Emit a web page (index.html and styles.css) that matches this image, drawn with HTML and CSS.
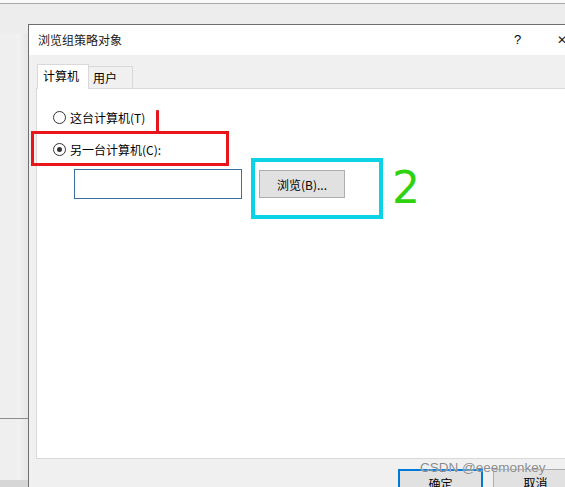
FILE: index.html
```html
<!DOCTYPE html>
<html lang="zh-CN">
<head>
<meta charset="utf-8">
<title>浏览组策略对象</title>
<link rel="stylesheet" href="styles.css">
</head>
<body>
<div class="desktop">
  <div class="topbar"></div>
  <div class="behind">
    <div class="behind-line"></div>
    <div class="behind-foot"></div>
  </div>

  <div class="dialog">
    <div class="titlebar">
      <span class="title">浏览组策略对象</span>
      <span class="help">?</span>
      <span class="close">✕</span>
    </div>
    <div class="body">
      <div class="tabs">
        <div class="tab active">计算机</div>
        <div class="tab">用户</div>
      </div>
      <div class="panel">
        <label class="radio-row first"><span class="radio"></span><span>这台计算机(T)</span></label>
        <label class="radio-row second"><span class="radio checked"></span><span>另一台计算机(C):</span></label>
        <div class="field-row">
          <div class="input"></div>
          <div class="button">浏览(B)...</div>
        </div>
      </div>
      <div class="footer">
        <div class="button footbtn default">确定</div>
        <div class="button footbtn">取消</div>
      </div>
    </div>
  </div>

  <div class="mark red-box"></div>
  <div class="mark red-one"></div>
  <div class="mark cyan-box"></div>
  <div class="mark green-two">2</div>
  <div class="mark watermark">CSDN @eeemonkey</div>
</div>
</body>
</html>
```
FILE: styles.css
```css
* { box-sizing: border-box; }
html, body { margin: 0; padding: 0; }
body {
  width: 565px;
  height: 487px;
  overflow: hidden;
  background: #efefef;
  font-family: "Noto Sans CJK SC", "Liberation Sans", sans-serif;
  font-size: 12px;
  color: #000;
}
.desktop {
  position: relative;
  width: 565px;
  height: 487px;
  overflow: hidden;
  background: #ededed;
}
.topbar {
  height: 4px;
  background: #fafafa;
  border-bottom: 1px solid #a8a8a8;
}
.behind {
  position: absolute;
  left: 0;
  top: 33px;
  width: 28px;
  height: 454px;
  background: linear-gradient(to right, #efefef 0px, #efefef 17px, #f3f3f3 17px, #e6e6e6 28px);
}
.behind-line {
  position: absolute;
  left: 0;
  top: 385px;
  width: 28px;
  height: 1px;
  background: #8c8c8c;
}
.behind-foot {
  position: absolute;
  left: 0;
  top: 447px;
  width: 28px;
  height: 7px;
  background: #d6d6d6;
}
.dialog {
  position: absolute;
  left: 28px;
  top: 24px;
  width: 580px;
  height: 500px;
  border: 1px solid #6f6f6f;
  background: #f0f0f0;
  display: flex;
  flex-direction: column;
}
.titlebar {
  height: 30px;
  background: #fff;
  display: flex;
  align-items: center;
  position: relative;
}
.title {
  margin-left: 9px;
  line-height: 30px;
  color: #1a1a1a;
}
.help {
  position: absolute;
  left: 485px;
  top: 0;
  line-height: 30px;
  font-family: "Liberation Sans", sans-serif;
  font-size: 13px;
}
.close {
  position: absolute;
  left: 528px;
  top: 0;
  line-height: 30px;
  font-family: "DejaVu Sans", sans-serif;
  font-size: 12px;
  color: #222;
}
.body {
  flex: 1;
  padding: 9px 0 0 7px;
  display: flex;
  flex-direction: column;
}
.tabs {
  display: flex;
  align-items: flex-end;
  height: 24px;
  position: relative;
  z-index: 1;
}
.tab {
  height: 22px;
  padding: 0 0 0 4px;
  width: 45px;
  border: 1px solid #d9d9d9;
  border-bottom: none;
  background: #f0f0f0;
  line-height: 22px;
  margin-left: -1px;
}
.tab.active {
  height: 25px;
  width: 52px;
  margin-left: 1px;
  margin-bottom: -1px;
  background: #fff;
  padding-left: 5px;
  line-height: 22px;
}
.panel {
  height: 371px;
  background: #fff;
  border: 1px solid #d9d9d9;
  display: flex;
  flex-direction: column;
  padding-left: 16px;
}
.radio-row {
  display: flex;
  align-items: center;
  gap: 4px;
  height: 16px;
}
.radio-row.first { margin-top: 20px; }
.radio-row.second { margin-top: 16px; }
.radio {
  width: 13px;
  height: 13px;
  border: 1px solid #333;
  border-radius: 50%;
  background: #fff;
  position: relative;
  flex: none;
}
.radio.checked::after {
  content: "";
  position: absolute;
  left: 3px;
  top: 3px;
  width: 5px;
  height: 5px;
  border-radius: 50%;
  background: #333;
}
.field-row {
  display: flex;
  align-items: flex-start;
  margin-top: 12px;
  margin-left: 21px;
  gap: 17px;
}
.input {
  width: 168px;
  height: 30px;
  border: 1px solid #3a6fa3;
  background: #fff;
}
.button {
  background: #e1e1e1;
  border: 1px solid #adadad;
  display: flex;
  align-items: center;
  justify-content: center;
}
.field-row .button {
  margin-top: 1px;
  width: 86px;
  height: 28px;
}
.footer {
  display: flex;
  gap: 10px;
  padding: 10px 0 0 362px;
}
.footbtn {
  width: 85px;
  height: 26px;
  align-items: flex-start;
  padding-top: 4px;
}
.footbtn.default {
  border: 2px solid #0078d7;
}
.mark { position: absolute; }
.red-box {
  left: 31px;
  top: 131px;
  width: 198px;
  height: 35px;
  border: 3px solid #e8151b;
}
.red-one {
  left: 156px;
  top: 110px;
  width: 3px;
  height: 23px;
  background: #e8151b;
  border-radius: 1px;
}
.cyan-box {
  left: 251px;
  top: 158px;
  width: 132px;
  height: 61px;
  border: 4px solid #0cd2e6;
}
.green-two {
  left: 392px;
  top: 160px;
  font-family: "DejaVu Sans", sans-serif;
  font-size: 44px;
  font-weight: normal;
  line-height: 56px;
  color: #2fd20f;
}
.watermark {
  left: 420px;
  top: 460px;
  font-family: "Liberation Sans", sans-serif;
  font-size: 13.5px;
  line-height: 16px;
  color: #8a8a8a;
  text-shadow: 0 0 1px #fff;
}
```
